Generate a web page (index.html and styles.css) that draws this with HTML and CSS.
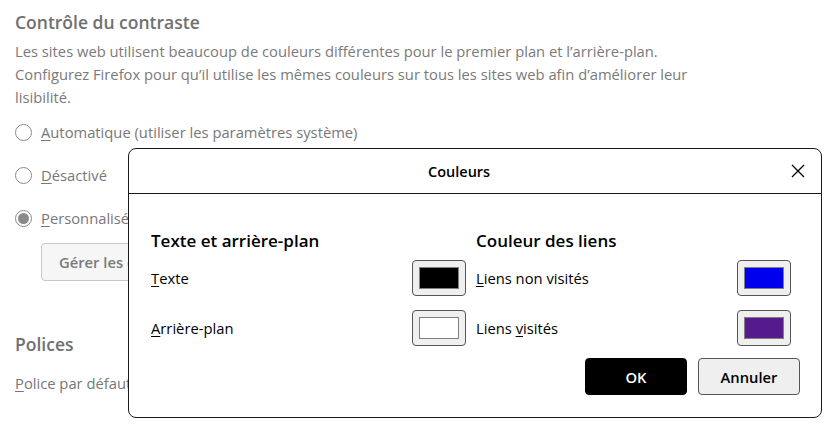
FILE: index.html
```html
<!DOCTYPE html>
<html lang="fr">
<head>
<meta charset="utf-8">
<title>Couleurs</title>
<link rel="stylesheet" href="styles.css">
</head>
<body>
<main class="page">
  <h1 class="section-title">Contrôle du contraste</h1>
  <p class="desc">Les sites web utilisent beaucoup de couleurs différentes pour le premier plan et l’arrière-plan.<br>Configurez Firefox pour qu’il utilise les mêmes couleurs sur tous les sites web afin d’améliorer leur<br>lisibilité.</p>
  <div class="radios">
    <label class="radio"><span class="dot"></span><span class="ak">A</span>utomatique (utiliser les paramètres système)</label>
    <label class="radio"><span class="dot"></span><span class="ak">D</span>ésactivé</label>
    <label class="radio"><span class="dot checked"></span><span class="ak">P</span>ersonnalisé</label>
  </div>
  <button class="page-btn">Gérer les couleurs…</button>
  <h2 class="section-title fonts">Polices</h2>
  <div class="font-row"><span class="ak">P</span>olice par défaut</div>
</main>

<div class="dialog">
  <header class="dlg-head">
    <span class="dlg-title">Couleurs</span>
    <span class="close" aria-label="Fermer">
      <svg width="14" height="14" viewBox="0 0 14 14"><path d="M1 1L13 13M13 1L1 13" stroke="#000" stroke-width="1.3" fill="none"/></svg>
    </span>
  </header>
  <div class="dlg-body">
    <div class="cols">
      <section class="col">
        <h3 class="col-title">Texte et arrière-plan</h3>
        <div class="row"><span class="lbl"><span class="ak">T</span>exte</span><span class="swatch"><span class="chip black"></span></span></div>
        <div class="row"><span class="lbl"><span class="ak">A</span>rrière-plan</span><span class="swatch"><span class="chip white"></span></span></div>
      </section>
      <section class="col">
        <h3 class="col-title">Couleur des liens</h3>
        <div class="row"><span class="lbl"><span class="ak">L</span>iens non visités</span><span class="swatch"><span class="chip blue"></span></span></div>
        <div class="row"><span class="lbl">Liens <span class="ak">v</span>isités</span><span class="swatch"><span class="chip purple"></span></span></div>
      </section>
    </div>
    <div class="actions">
      <button class="btn primary">OK</button>
      <button class="btn">Annuler</button>
    </div>
  </div>
</div>
</body>
</html>
```
FILE: styles.css
```css
* { box-sizing: border-box; }
html, body { margin: 0; padding: 0; background: #fff; }
body {
  width: 833px;
  height: 433px;
  overflow: hidden;
  font-family: "Open Sans", "Noto Sans", sans-serif;
  position: relative;
}
.ak { text-decoration: underline; text-decoration-thickness: 1px; text-underline-offset: 2px; }

.page {
  padding: 9px 0 0 15px;
  color: #777;
  font-size: 14.75px;
}
.section-title {
  margin: 0;
  font-size: 17.5px;
  font-weight: 600;
  line-height: 26px;
  color: #707070;
}
.desc {
  margin: 5px 0 0;
  line-height: 23px;
  color: #7a7a7a;
}
.radios {
  margin-top: 11px;
  display: flex;
  flex-direction: column;
  gap: 19px;
}
.radio {
  display: flex;
  align-items: center;
  height: 24px;
}
.dot {
  width: 17px;
  height: 17px;
  margin-right: 9px;
  border: 1.3px solid #8a8a8a;
  border-radius: 50%;
  display: inline-flex;
  align-items: center;
  justify-content: center;
}
.dot.checked::after {
  content: "";
  width: 11px;
  height: 11px;
  border-radius: 50%;
  background: #8a8a8a;
}
.page-btn {
  margin: 13px 0 0 26px;
  height: 38px;
  padding: 0 17px;
  border: 1px solid #c8c8c8;
  border-radius: 4px;
  background: #f6f6f6;
  color: #7a7a7a;
  font: 600 14.75px "Open Sans", "Noto Sans", sans-serif;
}
.fonts { margin-top: 50px; }
.font-row { margin-top: 14px; line-height: 24px; }

.dialog {
  position: absolute;
  left: 128px;
  top: 148px;
  width: 694px;
  height: 270px;
  border: 1.3px solid #1a1a1a;
  border-radius: 8px;
  background: #fff;
  color: #000;
  font-size: 14.75px;
  display: flex;
  flex-direction: column;
}
.dlg-head {
  height: 45px;
  flex: none;
  border-bottom: 1.3px solid #1a1a1a;
  display: flex;
  align-items: center;
  padding: 0 16px 0 299px;
}
.dlg-title { font-weight: 600; font-size: 14.5px; flex: 1; }
.close { display: flex; width: 14px; height: 14px; }

.dlg-body { padding: 34px 21px 0 22px; }
.cols {
  display: grid;
  grid-template-columns: 315px 315px;
  column-gap: 10px;
}
.col { display: flex; flex-direction: column; }
.col-title {
  margin: 0 0 7px;
  font-size: 17px;
  font-weight: 600;
  line-height: 25px;
}
.row {
  display: flex;
  align-items: center;
  justify-content: space-between;
  height: 36px;
  margin-bottom: 14px;
}
.lbl { font-kerning: none; line-height: 20px; }
.swatch {
  width: 54px;
  height: 36px;
  border: 1px solid #555;
  border-radius: 4px;
  background: #efefef;
  display: flex;
  align-items: center;
  justify-content: center;
}
.chip {
  width: 40px;
  height: 22px;
  border: 1px solid #808080;
}
.chip.black { background: #000; }
.chip.white { background: #fff; }
.chip.blue { background: #0000ee; }
.chip.purple { background: #551a8b; }

.actions {
  display: flex;
  justify-content: flex-end;
  gap: 11px;
  margin-top: -2px;
}
.btn {
  width: 102px;
  height: 37px;
  border: 1px solid #555;
  border-radius: 4px;
  background: #efefef;
  color: #000;
  font: 600 14.75px "Open Sans", "Noto Sans", sans-serif;
}
.btn.primary {
  background: #000;
  color: #fff;
  border-color: #000;
}
```
